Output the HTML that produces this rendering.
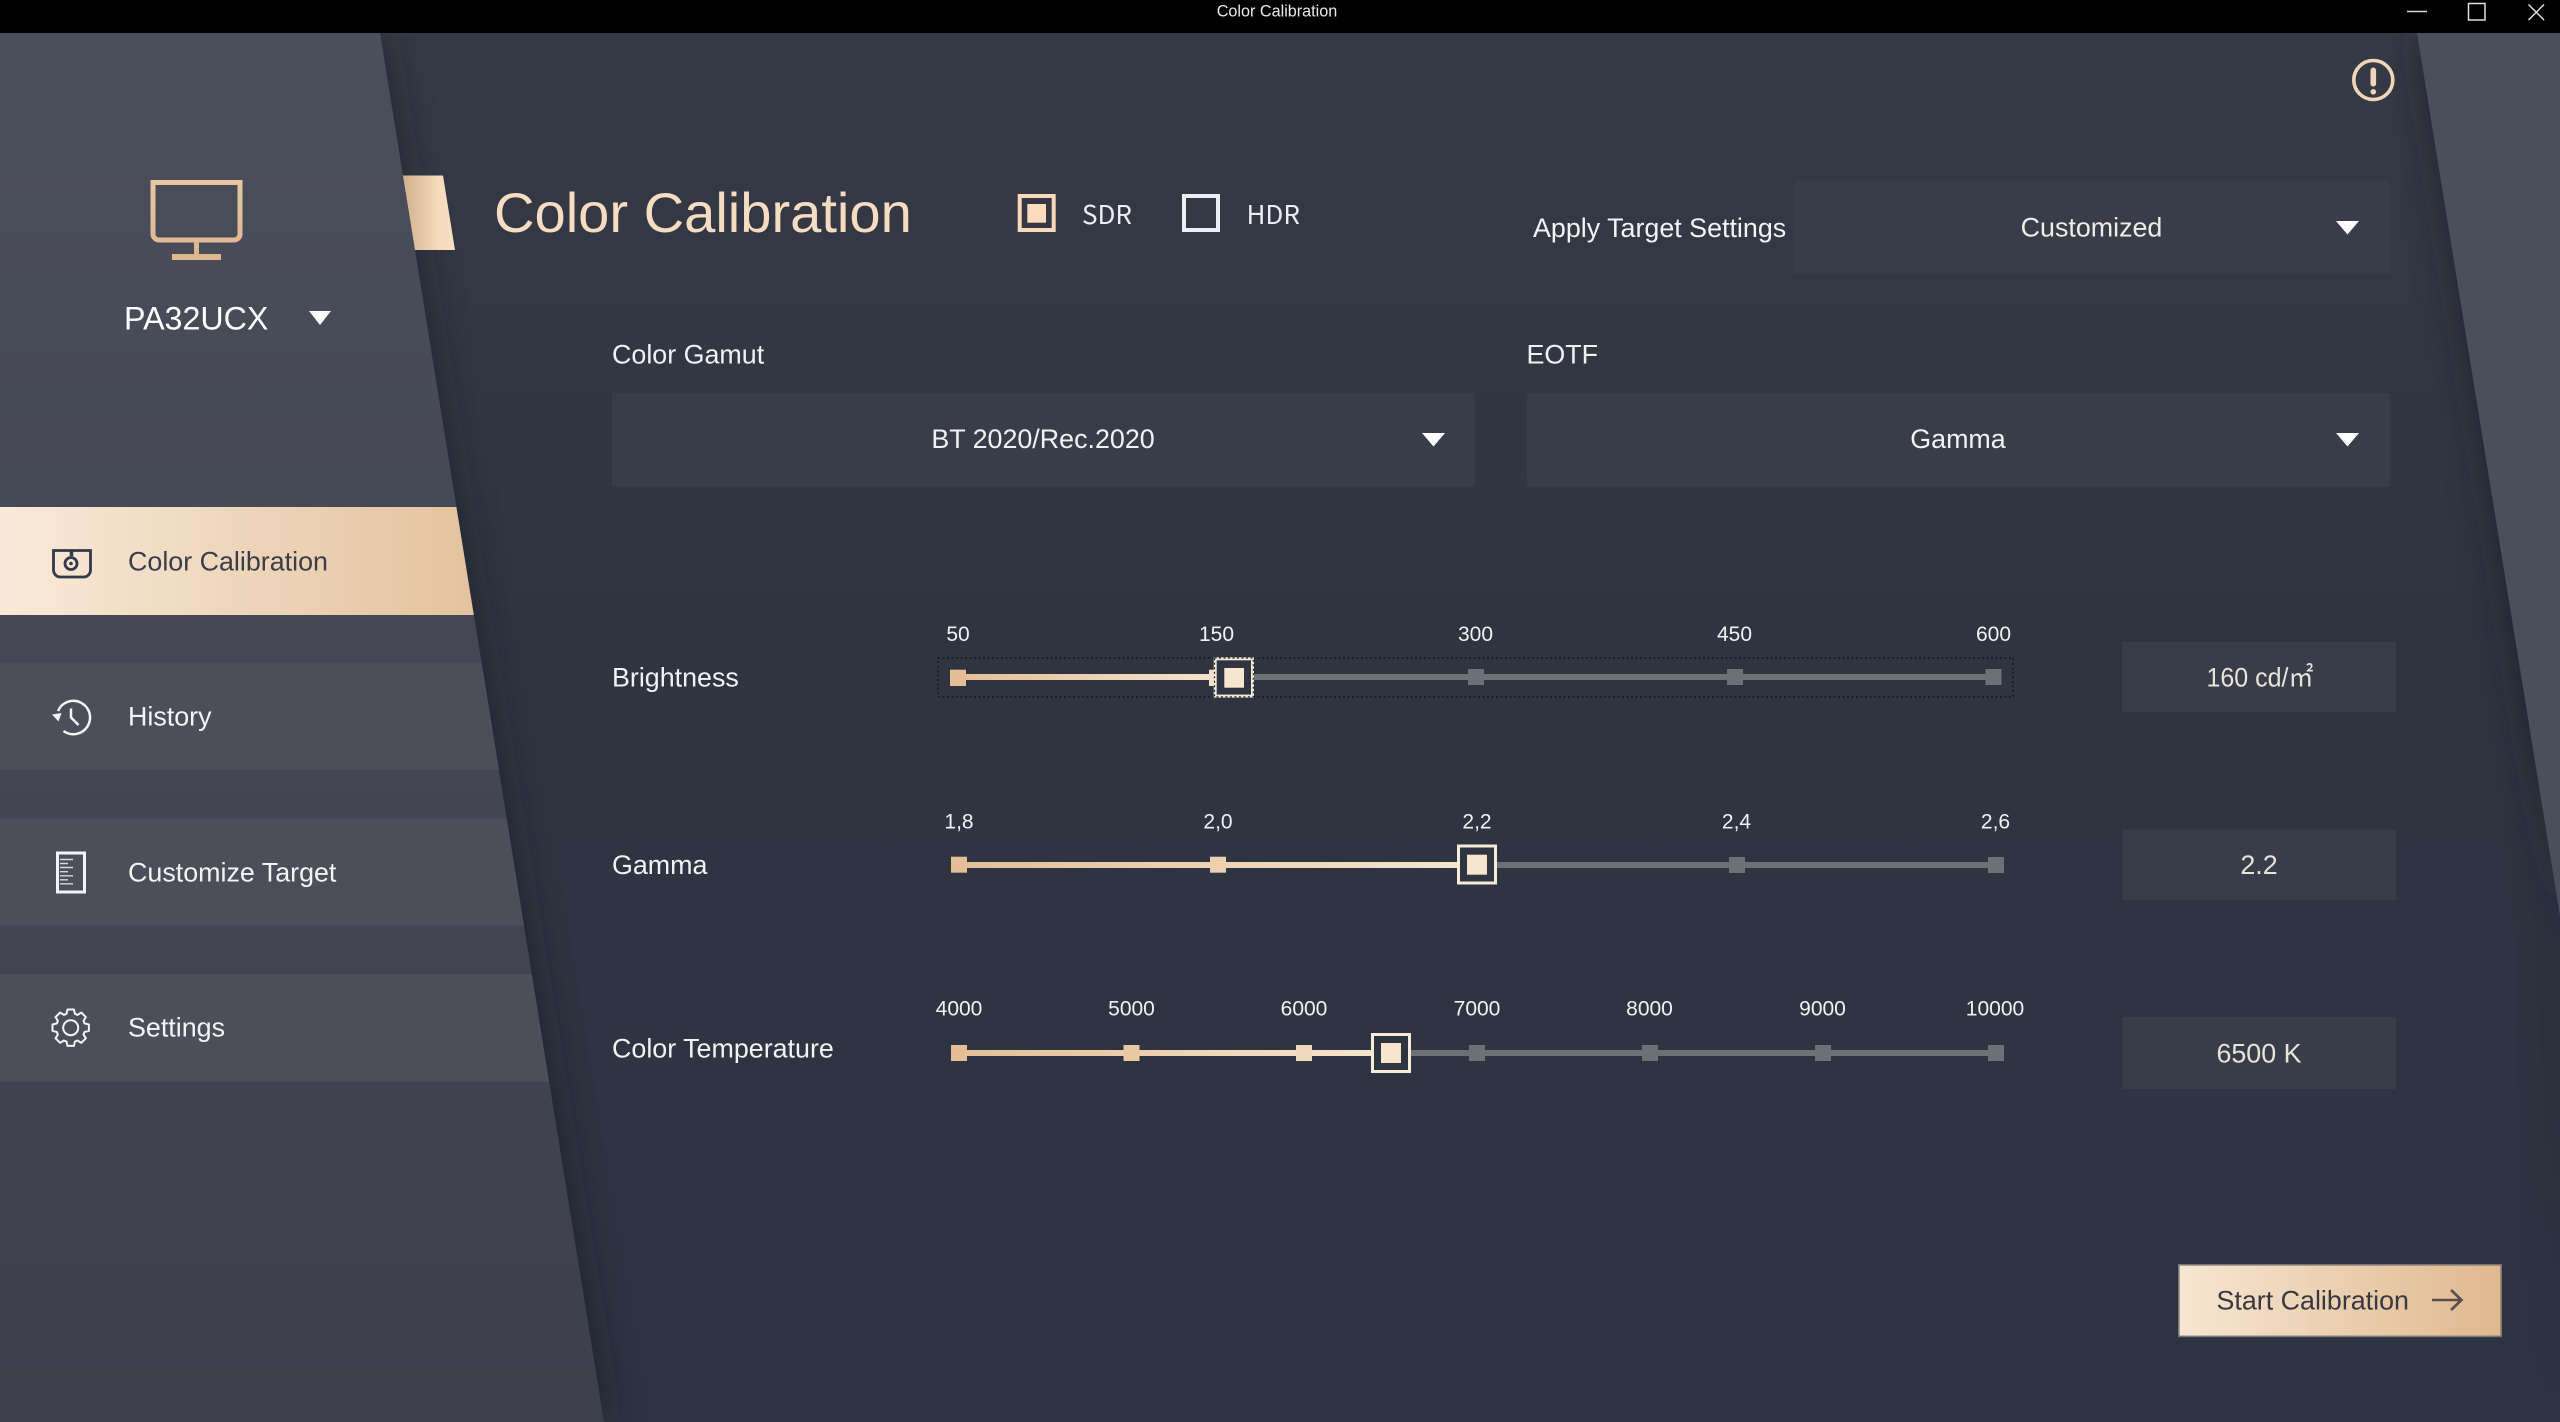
<!DOCTYPE html>
<html lang="en"><head><meta charset="utf-8"><title>Color Calibration</title>
<style>
html,body{margin:0;padding:0;background:#000;width:2560px;height:1422px;overflow:hidden}
svg{display:block;position:absolute;left:0;top:0}
text{font-family:"Liberation Sans","Noto Sans CJK JP",sans-serif;font-size:26.85px;fill:#f2f2f2}
.m{text-anchor:middle}
.t{font-size:21px;text-anchor:middle;fill:#f2f2f2}
.v{fill:#e9e3da;text-anchor:middle}
.box{fill:#393d49}
.off{fill:#6d7074}
</style></head><body>
<svg width="2560" height="1422" viewBox="0 0 2560 1422" xmlns="http://www.w3.org/2000/svg">
<defs>
<linearGradient id="bg" x1="0" y1="33" x2="0" y2="1422" gradientUnits="userSpaceOnUse"><stop offset="0" stop-color="#363a46"/><stop offset=".45" stop-color="#2f3441"/><stop offset="1" stop-color="#2d3341"/></linearGradient>
<linearGradient id="side" x1="0" y1="33" x2="0" y2="1422" gradientUnits="userSpaceOnUse"><stop offset="0" stop-color="#4b4f5b"/><stop offset=".5" stop-color="#444653"/><stop offset="1" stop-color="#3e3f4c"/></linearGradient>
<linearGradient id="active" x1="0" y1="0" x2="473" y2="0" gradientUnits="userSpaceOnUse"><stop offset="0" stop-color="#f8ead9"/><stop offset="1" stop-color="#e4c29e"/></linearGradient>
<linearGradient id="tab" x1="402" y1="0" x2="455" y2="0" gradientUnits="userSpaceOnUse"><stop offset="0" stop-color="#cfb08c"/><stop offset=".7" stop-color="#f6dbbc"/><stop offset="1" stop-color="#f8dfc2"/></linearGradient>
<linearGradient id="mon" x1="0" y1="180" x2="0" y2="260" gradientUnits="userSpaceOnUse"><stop offset="0" stop-color="#e6c7a2"/><stop offset="1" stop-color="#dcb78f"/></linearGradient>
<linearGradient id="btn" x1="2178" y1="0" x2="2502" y2="0" gradientUnits="userSpaceOnUse"><stop offset="0" stop-color="#f7e6d2"/><stop offset="1" stop-color="#dfb88e"/></linearGradient>
<linearGradient id="f1" x1="958" y1="0" x2="1234" y2="0" gradientUnits="userSpaceOnUse"><stop offset="0" stop-color="#e4bf96"/><stop offset="1" stop-color="#f6e5d0"/></linearGradient>
<linearGradient id="f2" x1="959" y1="0" x2="1477" y2="0" gradientUnits="userSpaceOnUse"><stop offset="0" stop-color="#e4bf96"/><stop offset="1" stop-color="#f6e5d0"/></linearGradient>
<linearGradient id="f3" x1="959" y1="0" x2="1390" y2="0" gradientUnits="userSpaceOnUse"><stop offset="0" stop-color="#e4bf96"/><stop offset="1" stop-color="#f6e5d0"/></linearGradient>
<filter id="blur" x="-30%" y="-10%" width="160%" height="120%"><feGaussianBlur stdDeviation="18"/></filter>
</defs>

<!-- background -->
<rect x="0" y="33" width="2560" height="1389" fill="url(#bg)"/>
<polygon points="0,33 386,33 610,1422 0,1422" fill="#14161f" opacity=".45" filter="url(#blur)"/>
<polygon points="2411,33 2560,33 2560,1422 2552,916" fill="#14161f" opacity=".45" filter="url(#blur)"/>

<!-- accent tab -->
<polygon points="395,175.500 443,175.500 455,250 395,250" fill="url(#tab)"/>

<!-- sidebar -->
<polygon points="0,33 380,33 604,1422 0,1422" fill="url(#side)"/>
<polygon points="2417,33 2560,33 2560,916" fill="#4b4f5b"/>

<!-- nav items -->
<polygon points="0,507 456.400,507 473.800,615 0,615" fill="url(#active)"/>
<polygon points="0,663 481.700,663 499,770 0,770" fill="#4c4e5a"/>
<polygon points="0,818.500 506.700,818.500 524,925.500 0,925.500" fill="#4c4e5a"/>
<polygon points="0,974 531.800,974 549,1081.500 0,1081.500" fill="#4c4e5a"/>

<!-- title bar -->
<rect x="0" y="0" width="2560" height="33" fill="#000"/>
<text class="m" x="1277" y="16.500" style="font-size:16.200px;fill:#e8e8e8">Color Calibration</text>
<path d="M2407 11.500H2427" stroke="#d8d8d8" stroke-width="1.600" fill="none"/>
<rect x="2468.500" y="3.500" width="16.500" height="16.500" stroke="#e0e0e0" stroke-width="1.500" fill="none"/>
<path d="M2528.500 4.500L2544 20M2544 4.500L2528.500 20" stroke="#e0e0e0" stroke-width="1.500" fill="none"/>

<!-- monitor -->
<path d="M153 182.500H240V234a6 6 0 0 1-6 6H159a6 6 0 0 1-6-6Z" fill="none" stroke="url(#mon)" stroke-width="5"/>
<path d="M196.500 242V255" stroke="#dcb78f" stroke-width="5" fill="none"/>
<rect x="172" y="254" width="49" height="6" fill="#dcb78f"/>
<text x="124" y="329.500" style="font-size:32.200px;fill:#fff">PA32UCX</text>
<polygon points="309,311 331,311 320,325" fill="#fff"/>

<!-- camera icon -->
<path d="M53.500 550.500H90.500V570a7 7 0 0 1-7 7H60.500a7 7 0 0 1-7-7Z" fill="none" stroke="#33384a" stroke-width="2.800"/>
<path d="M71.500 550V556" stroke="#33384a" stroke-width="3.500"/>
<circle cx="71" cy="563.500" r="6" fill="none" stroke="#33384a" stroke-width="2.800"/>
<circle cx="71" cy="563.500" r="1.800" fill="#33384a"/>
<text x="128" y="570.500" style="fill:#3a3c48">Color Calibration</text>

<!-- history icon -->
<path d="M58 711A16.700 16.700 0 1 1 63.500 731" fill="none" stroke="#f4f4f4" stroke-width="2.500"/>
<polygon points="52,714.500 61.500,713 58.500,721.500" fill="#f4f4f4"/>
<path d="M71 708.500V717.500L78.500 725" fill="none" stroke="#f4f4f4" stroke-width="2.500"/>
<text x="128" y="725.500" style="fill:#f4f4f4">History</text>

<!-- doc icon -->
<rect x="57.500" y="853" width="27" height="39" fill="none" stroke="#f4f4f4" stroke-width="3"/>
<path d="M60 859.500H73M60 863.500H68M60 867.500H73M60 871.700H68M60 875.800H73M60 879.800H68M60 883.800H73" stroke="#d8d8dc" stroke-width="1.400" fill="none"/>
<text x="128" y="881.500" style="fill:#f4f4f4">Customize Target</text>

<!-- gear icon -->
<g transform="translate(70.700,1027.700)" fill="none" stroke="#f4f4f4" stroke-width="2" stroke-linejoin="round">
<polygon points="-4.240,-13.870 -3.210,-18.220 3.210,-18.220 4.240,-13.870 6.810,-12.810 10.610,-15.150 15.150,-10.610 12.810,-6.810 13.870,-4.240 18.220,-3.210 18.220,3.210 13.870,4.240 12.810,6.810 15.150,10.610 10.610,15.150 6.810,12.810 4.240,13.870 3.210,18.220 -3.210,18.220 -4.240,13.870 -6.810,12.810 -10.610,15.150 -15.150,10.610 -12.810,6.810 -13.870,4.240 -18.220,3.210 -18.220,-3.210 -13.870,-4.240 -12.810,-6.810 -15.150,-10.610 -10.610,-15.150 -6.810,-12.810"/>
<circle r="7.500"/>
</g>
<text x="128" y="1036.500" style="fill:#f4f4f4">Settings</text>

<!-- alert -->
<circle cx="2373.300" cy="80" r="19.500" fill="none" stroke="#f0d6b8" stroke-width="3.600"/>
<rect x="2370.500" y="67.500" width="5.600" height="19" rx="2.800" fill="#f0d6b8"/>
<circle cx="2373.300" cy="91.800" r="2.800" fill="#f0d6b8"/>

<!-- header -->
<text x="494" y="232" style="font-size:56.100px;fill:#f6dcc0">Color Calibration</text>
<rect x="1019.700" y="196" width="34" height="34" fill="none" stroke="#f9d8b9" stroke-width="4"/>
<rect x="1027.300" y="204" width="18.700" height="18.700" fill="#fcdcbd"/>
<text x="1082" y="224" style="font-family:'Noto Sans CJK JP','Liberation Sans',sans-serif;font-size:26px;fill:#eceef2">SDR</text>
<rect x="1184" y="196" width="34" height="34" fill="none" stroke="#eceef2" stroke-width="4"/>
<text x="1246.500" y="224" style="font-family:'Noto Sans CJK JP','Liberation Sans',sans-serif;font-size:26px;fill:#eceef2">HDR</text>
<text x="1533" y="237" style="fill:#f4f4f4">Apply Target Settings</text>
<rect class="box" x="1794" y="180.700" width="596" height="93.300"/>
<text class="m" x="2091.500" y="236.500" style="fill:#f0ece6">Customized</text>
<polygon points="2336,221 2359,221 2347.500,234.500" fill="#fff"/>

<!-- dropdowns -->
<text x="612" y="363.500">Color Gamut</text>
<rect class="box" x="612" y="393" width="863" height="93.500"/>
<text class="m" x="1043" y="448">BT 2020/Rec.2020</text>
<polygon points="1422,433 1445,433 1433.500,446.500" fill="#fff"/>
<text x="1526.500" y="363.500">EOTF</text>
<rect class="box" x="1526.500" y="393" width="863.500" height="93.500"/>
<text class="m" x="1958" y="448">Gamma</text>
<polygon points="2336,433 2359,433 2347.500,446.500" fill="#fff"/>

<!-- Brightness -->
<text x="612" y="686.500">Brightness</text>
<text class="t" x="958" y="641">50</text><text class="t" x="1216.500" y="641">150</text><text class="t" x="1475.500" y="641">300</text><text class="t" x="1734.500" y="641">450</text><text class="t" x="1993.500" y="641">600</text>
<rect x="938" y="658" width="1075" height="39" fill="none" stroke="#14161d" stroke-width="1.500" stroke-dasharray="2 2.500"/>
<rect class="off" x="1234" y="674" width="760" height="6"/>
<rect x="958" y="674" width="276" height="6" fill="url(#f1)"/>
<rect x="950" y="669.700" width="16" height="16.300" fill="#e4bf96"/>
<rect x="1209" y="669.700" width="16" height="16.300" fill="#f3dfc6"/>
<rect class="off" x="1468" y="669" width="16" height="16"/><rect class="off" x="1727" y="669" width="16" height="16"/><rect class="off" x="1985.500" y="669" width="16" height="16"/>
<rect x="1215.200" y="658.800" width="37.300" height="37.300" fill="#2f3441" stroke="#f6ead9" stroke-width="3"/>
<rect x="1214.500" y="658" width="38.800" height="38.800" fill="none" stroke="#20232c" stroke-width="1.200" stroke-dasharray="2 2.500"/>
<rect x="1224.300" y="668" width="19.700" height="19.700" fill="#f6e5cf"/>

<!-- Gamma -->
<text x="612" y="874">Gamma</text>
<text class="t" x="959" y="828.500">1,8</text><text class="t" x="1218" y="828.500">2,0</text><text class="t" x="1477" y="828.500">2,2</text><text class="t" x="1736.500" y="828.500">2,4</text><text class="t" x="1995.500" y="828.500">2,6</text>
<rect class="off" x="1477" y="862" width="518" height="6"/>
<rect x="959" y="862" width="518" height="6" fill="url(#f2)"/>
<rect x="951" y="856.700" width="16" height="16" fill="#e4bf96"/>
<rect x="1210" y="856.700" width="16" height="16" fill="#eccfae"/>
<rect class="off" x="1729" y="857" width="16" height="16"/><rect class="off" x="1988" y="857" width="16" height="16"/>
<rect x="1458.500" y="846" width="37" height="37" fill="#2f3441" stroke="#f6ead9" stroke-width="3"/>
<rect x="1467" y="854.700" width="20" height="20" fill="#f6e5cf"/>

<!-- Color Temperature -->
<text x="612" y="1057.500">Color Temperature</text>
<text class="t" x="959" y="1015.500">4000</text><text class="t" x="1131.500" y="1015.500">5000</text><text class="t" x="1304" y="1015.500">6000</text><text class="t" x="1477" y="1015.500">7000</text><text class="t" x="1649.500" y="1015.500">8000</text><text class="t" x="1822.500" y="1015.500">9000</text><text class="t" x="1995" y="1015.500">10000</text>
<rect class="off" x="1391" y="1050" width="605" height="6"/>
<rect x="959" y="1050" width="432" height="6" fill="url(#f3)"/>
<rect x="951" y="1045" width="16" height="16" fill="#e4bf96"/>
<rect x="1123.500" y="1045" width="16" height="16" fill="#e9c8a4"/>
<rect x="1296" y="1045" width="16" height="16" fill="#f0d8bc"/>
<rect class="off" x="1469" y="1045" width="16" height="16"/><rect class="off" x="1642" y="1045" width="16" height="16"/><rect class="off" x="1815" y="1045" width="16" height="16"/><rect class="off" x="1988" y="1045" width="16" height="16"/>
<rect x="1372.500" y="1034.500" width="37" height="37" fill="#2f3441" stroke="#f6ead9" stroke-width="3"/>
<rect x="1381" y="1043" width="20" height="20" fill="#f6e5cf"/>

<!-- value boxes -->
<rect class="box" x="2122" y="642" width="274" height="70.300"/>
<text class="v" x="2260" y="686.500" textLength="107" lengthAdjust="spacingAndGlyphs">160 cd/㎡</text>
<rect class="box" x="2122.500" y="829.500" width="273.500" height="70.500"/>
<text class="v" x="2259" y="874">2.2</text>
<rect class="box" x="2122.500" y="1017" width="273.500" height="72"/>
<text class="v" x="2259" y="1062.500">6500 K</text>

<!-- start button -->
<rect x="2178.800" y="1264.800" width="322.400" height="71.600" fill="url(#btn)" stroke="#7a7570" stroke-width="1.600"/>
<text x="2216.500" y="1309.500" style="fill:#38383f">Start Calibration</text>
<path d="M2432 1300H2461M2451 1290L2461.500 1300L2451 1310" fill="none" stroke="#55504c" stroke-width="2.600"/>
</svg>
</body></html>
